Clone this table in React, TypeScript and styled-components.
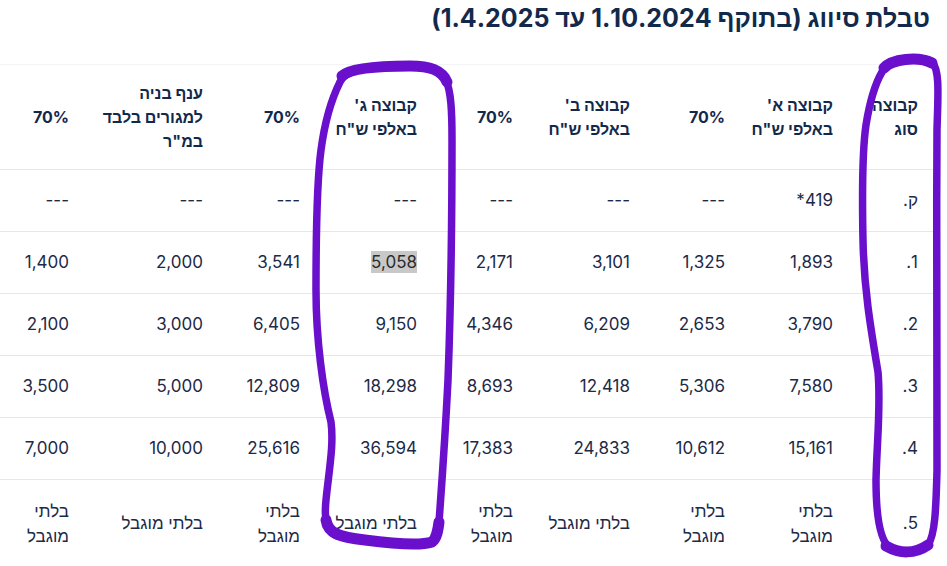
import React from 'react';
import styled, { createGlobalStyle } from 'styled-components';

const GlobalStyle = createGlobalStyle`
  html, body {
    margin: 0;
    padding: 0;
    background: #ffffff;
  }
  body {
    direction: rtl;
    font-family: Inter, "Liberation Sans", "DejaVu Sans", sans-serif;
    color: #1c2a47;
  }
`;

const widths = [85, 108, 95, 117, 96, 117, 97, 134, 86];

const headers: string[][] = [
  ['קבוצה', 'סוג'],
  ["קבוצה א'", 'באלפי ש"ח'],
  ['70%'],
  ["קבוצה ב'", 'באלפי ש"ח'],
  ['70%'],
  ["קבוצה ג'", 'באלפי ש"ח'],
  ['70%'],
  ['ענף בניה', 'למגורים בלבד', 'במ"ר'],
  ['70%'],
];

const rows: string[][] = [
  ['ק.', '419*', '---', '---', '---', '---', '---', '---', '---'],
  ['1.', '1,893', '1,325', '3,101', '2,171', '5,058', '3,541', '2,000', '1,400'],
  ['2.', '3,790', '2,653', '6,209', '4,346', '9,150', '6,405', '3,000', '2,100'],
  ['3.', '7,580', '5,306', '12,418', '8,693', '18,298', '12,809', '5,000', '3,500'],
  ['4.', '15,161', '10,612', '24,833', '17,383', '36,594', '25,616', '10,000', '7,000'],
  ['5.', 'בלתי מוגבל', 'בלתי מוגבל', 'בלתי מוגבל', 'בלתי מוגבל', 'בלתי מוגבל', 'בלתי מוגבל', 'בלתי מוגבל', 'בלתי מוגבל'],
];

export default function App() {
  return (
    <>
      <GlobalStyle />
      <Page>
        <Title>טבלת סיווג (בתוקף 1.10.2024 עד 1.4.2025)</Title>
        <TableWrap>
          <Table>
            <colgroup>
              {widths.map((w, i) => <col key={i} style={{ width: w }} />)}
            </colgroup>
            <thead>
              <tr>
                {headers.map((lines, i) => (
                  <HeadCell key={i}>
                    {lines.map((l, j) => <HeadLine key={j}>{l}</HeadLine>)}
                  </HeadCell>
                ))}
              </tr>
            </thead>
            <tbody>
              {rows.map((r, ri) => (
                <Row key={ri} last={ri === rows.length - 1}>
                  {r.map((v, ci) => (
                    <Cell key={ci}>
                      {v === '5,058' ? <Selected>{v}</Selected> : v}
                    </Cell>
                  ))}
                </Row>
              ))}
            </tbody>
          </Table>
        </TableWrap>
        {/* hand-drawn marker rings over the table */}
        <Scribbles width="947" height="566" viewBox="0 0 947 566">
          <path d="M 340 82 C 345 70, 365 67, 400 66 C 425 65, 440 68, 446 80 C 451 92, 452 110, 452 140 C 452 220, 451 300, 448 380 C 445 440, 441 495, 439 522 C 438 538, 432 545, 418 545 C 395 544, 365 541, 338 536 C 326 533, 324 520, 326 500 C 329 470, 334 445, 331 422 C 323 390, 316 340, 316 290 C 316 230, 317 180, 321 150 C 325 120, 332 98, 340 82 Z" />
          <ThickStroke d="M 342 76 C 350 68, 380 66, 410 66 C 430 66, 442 70, 447 82" />
          <ThickStroke d="M 326 520 C 328 534, 340 537, 365 540 C 395 544, 420 546, 432 542 C 437 538, 438 530, 439 522" />
          <path d="M 882 72 C 888 60, 920 54, 932 62 C 940 70, 938 95, 937 130 C 936 250, 938 380, 937 470 C 936 510, 935 535, 928 545 C 915 556, 900 554, 890 548 C 879 540, 876 512, 876 480 C 877 440, 881 405, 878 372 C 871 330, 864 290, 863 240 C 862 190, 862 152, 866 125 C 870 100, 875 84, 882 72 Z" />
          <ThickStroke d="M 884 68 C 892 59, 918 56, 932 63" />
          <ThickStroke d="M 886 546 C 900 554, 915 554, 928 545" />
        </Scribbles>
      </Page>
    </>
  );
}

const Page = styled.div`
  position: relative;
  width: 947px;
  height: 566px;
  overflow: hidden;
`;

const Title = styled.h1`
  margin: 0 0 27px 0;
  padding: 0 17px 0 0;
  font-size: 25px;
  line-height: 37px;
  font-weight: 700;
  color: #13294b;
`;

const TableWrap = styled.div`
  padding-right: 12px;
`;

const Table = styled.table`
  width: 935px;
  table-layout: fixed;
  border-collapse: collapse;
  border-top: 1px solid #f3f4f6;
`;

const HeadCell = styled.th`
  height: 104px;
  padding: 0 17px 0 4px;
  text-align: right;
  vertical-align: middle;
  font-size: 16px;
  line-height: 24px;
  font-weight: 700;
  color: #13294b;
  border-bottom: 1px solid #e5e7eb;
`;

const HeadLine = styled.div`
  white-space: nowrap;
`;

const Row = styled.tr<{ last?: boolean }>`
  height: ${({ last }) => (last ? '88px' : '62px')};
  border-bottom: ${({ last }) => (last ? 'none' : '1px solid #e5e7eb')};
`;

const Cell = styled.td`
  padding: 0 17px 0 12px;
  text-align: right;
  vertical-align: middle;
  font-size: 17px;
  line-height: 25px;
  color: #1c2a47;
`;

const Selected = styled.span`
  background: #c8c8c8;
  color: #2b2b2b;
  padding: 1px 0;
`;

const Scribbles = styled.svg`
  position: absolute;
  top: 0;
  left: 0;
  pointer-events: none;
  fill: none;
  stroke: #6a10cc;
  stroke-width: 7.5;
  stroke-linejoin: round;
  stroke-linecap: round;
`;

const ThickStroke = styled.path`
  stroke-width: 11;
`;
